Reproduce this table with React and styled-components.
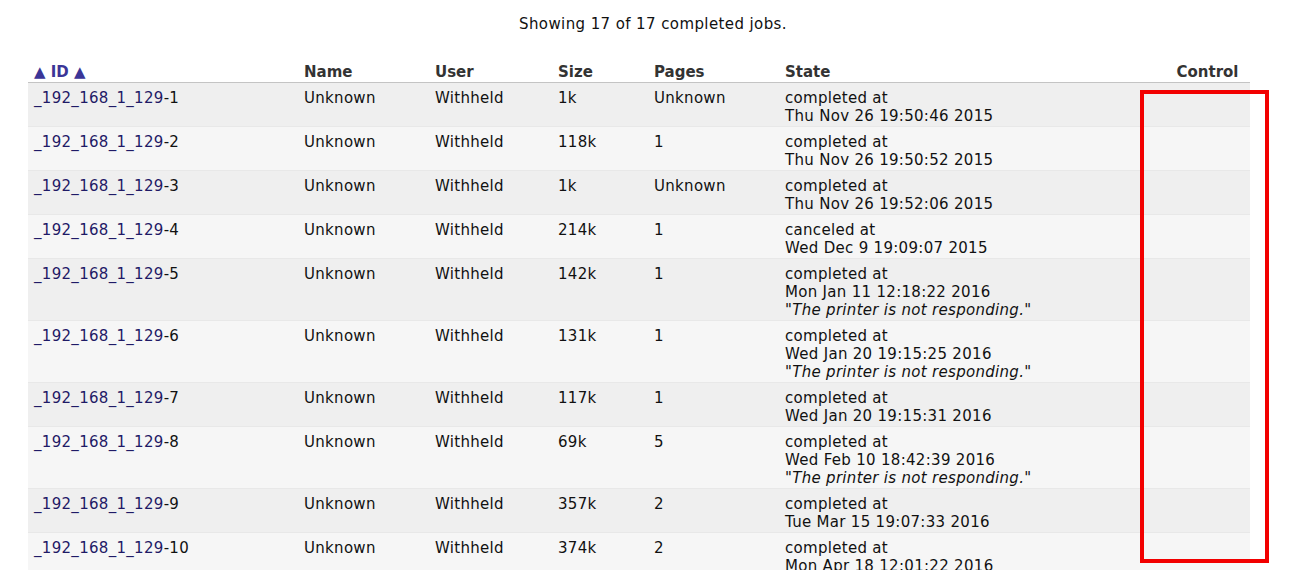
import React from 'react';
import styled, { createGlobalStyle } from 'styled-components';

const GlobalStyle = createGlobalStyle`
  body {
    margin: 0;
    background: #ffffff;
    font-family: "DejaVu Sans", Verdana, sans-serif;
    color: #111;
  }
`;

const JOBS = [
  { n: 1, size: '1k', pages: 'Unknown', state: 'completed at', when: 'Thu Nov 26 19:50:46 2015' },
  { n: 2, size: '118k', pages: '1', state: 'completed at', when: 'Thu Nov 26 19:50:52 2015' },
  { n: 3, size: '1k', pages: 'Unknown', state: 'completed at', when: 'Thu Nov 26 19:52:06 2015' },
  { n: 4, size: '214k', pages: '1', state: 'canceled at', when: 'Wed Dec 9 19:09:07 2015' },
  { n: 5, size: '142k', pages: '1', state: 'completed at', when: 'Mon Jan 11 12:18:22 2016', note: true },
  { n: 6, size: '131k', pages: '1', state: 'completed at', when: 'Wed Jan 20 19:15:25 2016', note: true },
  { n: 7, size: '117k', pages: '1', state: 'completed at', when: 'Wed Jan 20 19:15:31 2016' },
  { n: 8, size: '69k', pages: '5', state: 'completed at', when: 'Wed Feb 10 18:42:39 2016', note: true },
  { n: 9, size: '357k', pages: '2', state: 'completed at', when: 'Tue Mar 15 19:07:33 2016' },
  { n: 10, size: '374k', pages: '2', state: 'completed at', when: 'Mon Apr 18 12:01:22 2016' },
];

const App = () => (
  <Page>
    <GlobalStyle />
    <Summary>Showing 17 of 17 completed jobs.</Summary>
    <Table>
      <colgroup>
        <col style={{ width: 270 }} />
        <col style={{ width: 131 }} />
        <col style={{ width: 123 }} />
        <col style={{ width: 96 }} />
        <col style={{ width: 131 }} />
        <col style={{ width: 386 }} />
        <col style={{ width: 85 }} />
      </colgroup>
      <thead>
        <tr>
          <Th sort>▲ ID ▲</Th>
          <Th>Name</Th>
          <Th>User</Th>
          <Th>Size</Th>
          <Th>Pages</Th>
          <Th>State</Th>
          <Th center>Control</Th>
        </tr>
      </thead>
      <tbody>
        {JOBS.map((job) => (
          <Row key={job.n} odd={job.n % 2 === 1}>
            <Td>
              <JobLink>_192_168_1_129</JobLink>-{job.n}
            </Td>
            <Td>Unknown</Td>
            <Td>Withheld</Td>
            <Td>{job.size}</Td>
            <Td>{job.pages}</Td>
            <Td>
              {job.state}
              <br />
              {job.when}
              {job.note && (
                <>
                  <br />
                  <Note>"The printer is not responding."</Note>
                </>
              )}
            </Td>
            <Td />
          </Row>
        ))}
      </tbody>
    </Table>
    <Highlight />
  </Page>
);

export default App;

const Page = styled.div`
  position: relative;
  height: 570px;
  overflow: hidden;
  padding: 0 39px 0 28px;
`;

const Summary = styled.p`
  margin: 0;
  padding: 15px 0 0 28px;
  height: 48px;
  box-sizing: border-box;
  text-align: center;
  font-size: 15px;
  letter-spacing: 0.4px;
  line-height: 18px;
`;

const Table = styled.table`
  width: 1222px;
  border-collapse: collapse;
  table-layout: fixed;
  margin-top: 12px;
  font-size: 15px;
  line-height: 18px;
`;

const Th = styled.th`
  text-align: ${(p) => (p.center ? 'center' : 'left')};
  padding: 3px 6px 1px;
  font-weight: bold;
  font-size: 15px;
  color: ${(p) => (p.sort ? '#3b3597' : '#333')};
  border-bottom: 1px solid #c4c4c4;
  white-space: nowrap;
`;

const Row = styled.tr`
  background: ${(p) => (p.odd ? '#efefef' : '#f6f6f6')};
  border-bottom: 1px solid #e8e8e8;
`;

const Td = styled.td`
  vertical-align: top;
  padding: 6px 6px 1px;
  white-space: nowrap;
  letter-spacing: 0.3px;
`;

const JobLink = styled.span`
  color: #1f1a66;
`;

const Note = styled.em`
  font-style: italic;
`;

const Highlight = styled.div`
  position: absolute;
  left: 1140px;
  top: 90px;
  width: 129px;
  height: 473px;
  box-sizing: border-box;
  border: 4px solid #f20000;
`;
